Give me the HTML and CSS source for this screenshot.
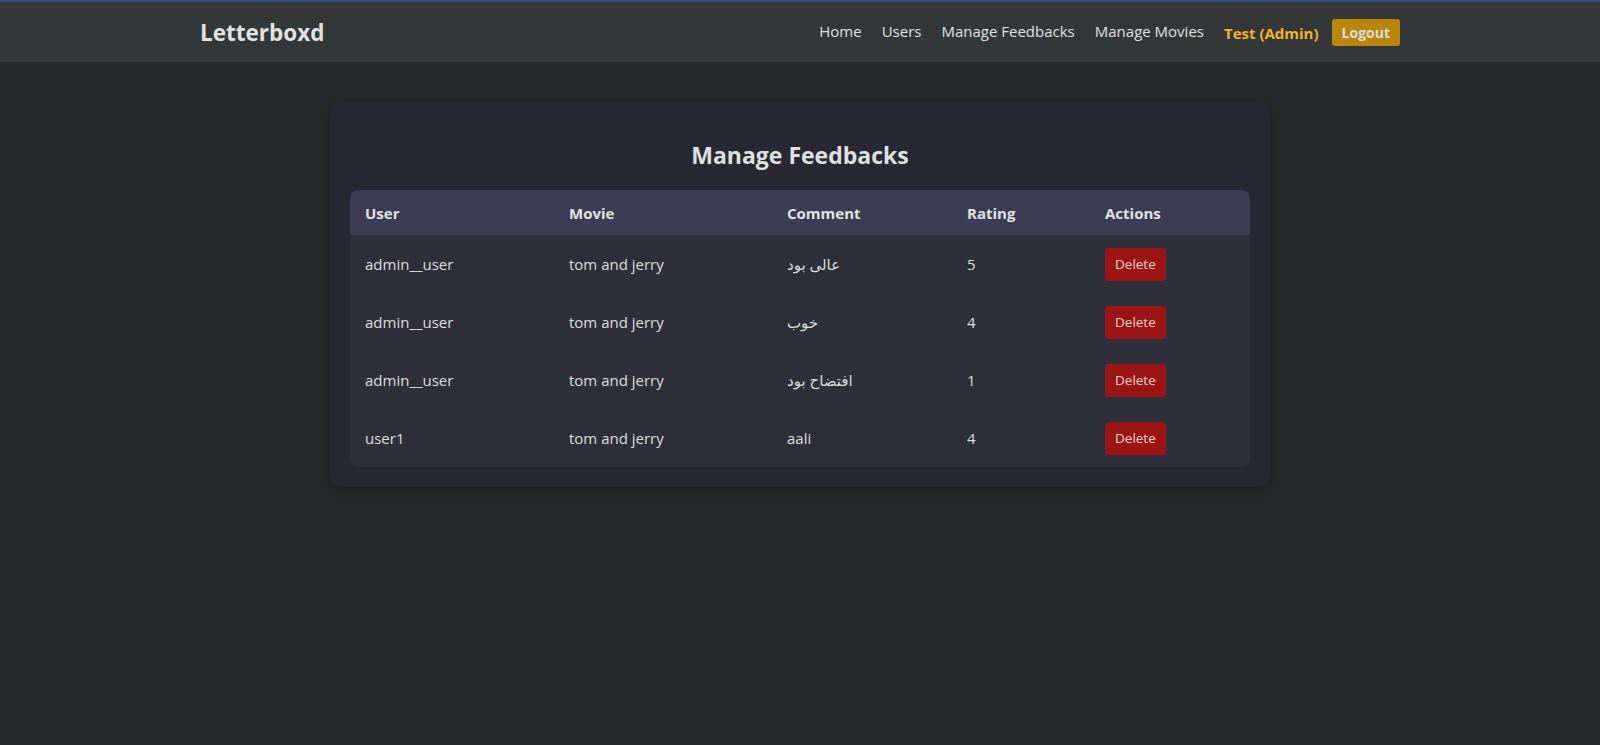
FILE: index.html
```html
<!DOCTYPE html>
<html lang="en">
<head>
<meta charset="utf-8">
<title>Manage Feedbacks - Letterboxd</title>
<link rel="stylesheet" href="styles.css">
</head>
<body>
<header class="navbar">
  <div class="nav-inner">
    <a class="brand" href="#">Letterboxd</a>
    <nav class="nav-links">
      <a href="#">Home</a>
      <a href="#">Users</a>
      <a href="#">Manage Feedbacks</a>
      <a href="#">Manage Movies</a>
      <span class="current-user">Test (Admin)</span>
      <button class="logout">Logout</button>
    </nav>
  </div>
</header>
<main class="page">
  <section class="card">
    <h2 class="title">Manage Feedbacks</h2>
    <table class="fb-table">
      <colgroup>
        <col class="c-user"><col class="c-movie"><col class="c-comment"><col class="c-rating"><col class="c-actions">
      </colgroup>
      <thead>
        <tr><th>User</th><th>Movie</th><th>Comment</th><th>Rating</th><th>Actions</th></tr>
      </thead>
      <tbody>
        <tr><td>admin__user</td><td>tom and jerry</td><td>عالی بود</td><td>5</td><td><button class="del">Delete</button></td></tr>
        <tr><td>admin__user</td><td>tom and jerry</td><td>خوب</td><td>4</td><td><button class="del">Delete</button></td></tr>
        <tr><td>admin__user</td><td>tom and jerry</td><td>افتضاح بود</td><td>1</td><td><button class="del">Delete</button></td></tr>
        <tr><td>user1</td><td>tom and jerry</td><td>aali</td><td>4</td><td><button class="del">Delete</button></td></tr>
      </tbody>
    </table>
  </section>
</main>
</body>
</html>
```
FILE: styles.css
```css
* { box-sizing: border-box; }
html, body { height: 100%; }
body {
  margin: 0;
  background: #28292b;
  color: #e0e0e0;
  font-family: "Open Sans", "Noto Sans", "DejaVu Sans", sans-serif;
  border-top: 2px solid #2c4a88;
}
.navbar {
  background: #343738;
  height: 60px;
}
.nav-inner {
  width: 1200px;
  margin: 0 auto;
  height: 100%;
  display: flex;
  align-items: center;
  justify-content: space-between;
}
.brand {
  color: #e2e2e2;
  font-weight: 700;
  font-size: 22.5px;
  text-decoration: none;
}
.nav-links {
  display: flex;
  align-items: center;
  gap: 20px;
  margin-top: -2px;
}
.nav-links a {
  color: #e0e0e0;
  text-decoration: none;
  font-size: 15px;
}
.current-user {
  color: #f0b429;
  font-weight: 700;
  font-size: 15px;
  margin-top: 3px;
  margin-right: -7px;
}
.logout {
  background: #b8860b;
  color: #dcdcdc;
  border: none;
  border-radius: 3px;
  font-family: inherit;
  font-weight: 700;
  font-size: 14px;
  height: 27px;
  padding: 0 10px;
  margin-top: 3px;
}
.page {
  padding-top: 40px;
}
.card {
  width: 940px;
  margin: 0 auto;
  background: #272833;
  border-radius: 12px;
  padding: 20px;
  box-shadow: 0 4px 12px rgba(0,0,0,0.25);
}
.title {
  text-align: center;
  font-size: 23px;
  font-weight: 700;
  color: #e0e0e0;
  margin: 17px 0 19px;
  line-height: 32px;
}
.fb-table {
  width: 900px;
  border-collapse: collapse;
  table-layout: fixed;
  border-radius: 8px;
  overflow: hidden;
  background: #2f2f3c;
}
.c-user { width: 204px; }
.c-movie { width: 218px; }
.c-comment { width: 180px; }
.c-rating { width: 138px; }
.c-actions { width: 160px; }
.fb-table th {
  background: #3c3c52;
  text-align: left;
  font-weight: 700;
  font-size: 15px;
  padding: 12px 15px;
  height: 45px;
  color: #e2e2e2;
}
.fb-table td {
  text-align: left;
  font-size: 15px;
  padding: 12px 15px;
  height: 58px;
  color: #dedede;
}
.del {
  background: #9b1515;
  color: #e8d0d0;
  border: none;
  border-radius: 4px;
  font-family: inherit;
  font-size: 13.5px;
  height: 33px;
  padding: 0 10px;
}
```
